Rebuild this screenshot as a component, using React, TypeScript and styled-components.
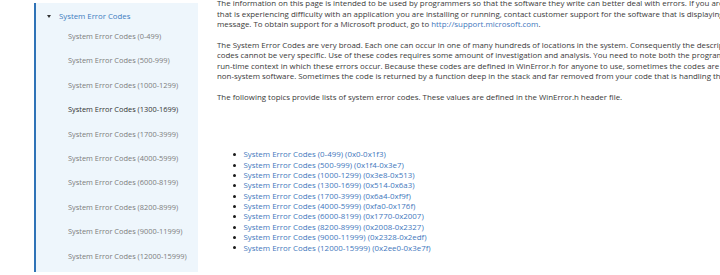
import React from "react";
import styled, { createGlobalStyle } from "styled-components";

const Global = createGlobalStyle`
  html, body { margin: 0; padding: 0; background: #ffffff; }
  body { width: 720px; height: 275px; overflow: hidden; font-family: "Open Sans", "Noto Sans", sans-serif; }
`;

const Page = styled.div`
  display: flex;
  width: 720px;
  height: 275px;
  overflow: hidden;
  padding-left: 34px;
  box-sizing: border-box;
`;

const Sidebar = styled.nav`
  flex: 0 0 164px;
  box-sizing: border-box;
  margin-top: 3px;
  height: 269px;
  background: #eef6fc;
  border-left: 2px solid #2f73b7;
  padding-top: 5px;
  display: flex;
  flex-direction: column;
`;

const Header = styled.div`
  display: flex;
  align-items: center;
  height: 16px;
  padding-left: 11px;
  font-size: 7.8px;
  color: #3d7cc0;
  white-space: nowrap;
`;

const Caret = styled.span`
  width: 0;
  height: 0;
  border-left: 2px solid transparent;
  border-right: 2px solid transparent;
  border-top: 3px solid #333;
  margin-right: 8px;
`;

const Item = styled.div<{ $active?: boolean }>`
  height: 24.4px;
  line-height: 24.4px;
  padding-left: 32px;
  font-size: 7.4px;
  white-space: nowrap;
  color: ${(p) => (p.$active ? "#333333" : "#7d7d7d")};
`;

const Main = styled.main`
  flex: 1 1 auto;
  margin-left: 19px;
  margin-top: -2px;
  font-size: 7.9px;
  line-height: 10.5px;
  color: #3a3a3a;
  min-width: 0;
`;

const Para = styled.p`
  margin: 0 0 10px 0;
  white-space: nowrap;
`;

const Link = styled.a`
  color: #3f78bd;
  text-decoration: none;
`;

const List = styled.ul`
  list-style: none;
  margin: 47.5px 0 0 0;
  padding: 0 0 0 16px;
`;

const ListItem = styled.li`
  display: flex;
  align-items: center;
  height: 10.35px;
  white-space: nowrap;
  &::before {
    content: "";
    width: 3px;
    height: 3px;
    border-radius: 50%;
    background: #1a1a1a;
    margin-right: 7.5px;
    flex: none;
  }
`;

const navItems = [
  "0-499",
  "500-999",
  "1000-1299",
  "1300-1699",
  "1700-3999",
  "4000-5999",
  "6000-8199",
  "8200-8999",
  "9000-11999",
  "12000-15999",
];

const links: [string, string][] = [
  ["0-499", "0x0-0x1f3"],
  ["500-999", "0x1f4-0x3e7"],
  ["1000-1299", "0x3e8-0x513"],
  ["1300-1699", "0x514-0x6a3"],
  ["1700-3999", "0x6a4-0xf9f"],
  ["4000-5999", "0xfa0-0x176f"],
  ["6000-8199", "0x1770-0x2007"],
  ["8200-8999", "0x2008-0x2327"],
  ["9000-11999", "0x2328-0x2edf"],
  ["12000-15999", "0x2ee0-0x3e7f"],
];

export default function App() {
  return (
    <>
      <Global />
      <Page>
        <Sidebar>
          <Header>
            <Caret />
            System Error Codes
          </Header>
          {navItems.map((r) => (
            <Item key={r} $active={r === "1300-1699"}>
              System Error Codes ({r})
            </Item>
          ))}
        </Sidebar>
        <Main>
          <Para>
            The information on this page is intended to be used by programmers so that the software they write can better deal with errors. If you are a user
            <br />
            that is experiencing difficulty with an application you are installing or running, contact customer support for the software that is displaying the error
            <br />
            message. To obtain support for a Microsoft product, go to <Link href="#">http://support.microsoft.com</Link>.
          </Para>
          <Para>
            The System Error Codes are very broad. Each one can occur in one of many hundreds of locations in the system. Consequently the descriptions of these
            <br />
            codes cannot be very specific. Use of these codes requires some amount of investigation and analysis. You need to note both the programmatic and the
            <br />
            run-time context in which these errors occur. Because these codes are defined in WinError.h for anyone to use, sometimes the codes are returned by
            <br />
            non-system software. Sometimes the code is returned by a function deep in the stack and far removed from your code that is handling the error.
          </Para>
          <Para>
            The following topics provide lists of system error codes. These values are defined in the WinError.h header file.
          </Para>
          <List>
            {links.map(([d, h]) => (
              <ListItem key={d}>
                <Link href="#">
                  System Error Codes ({d}) ({h})
                </Link>
              </ListItem>
            ))}
          </List>
        </Main>
      </Page>
    </>
  );
}
